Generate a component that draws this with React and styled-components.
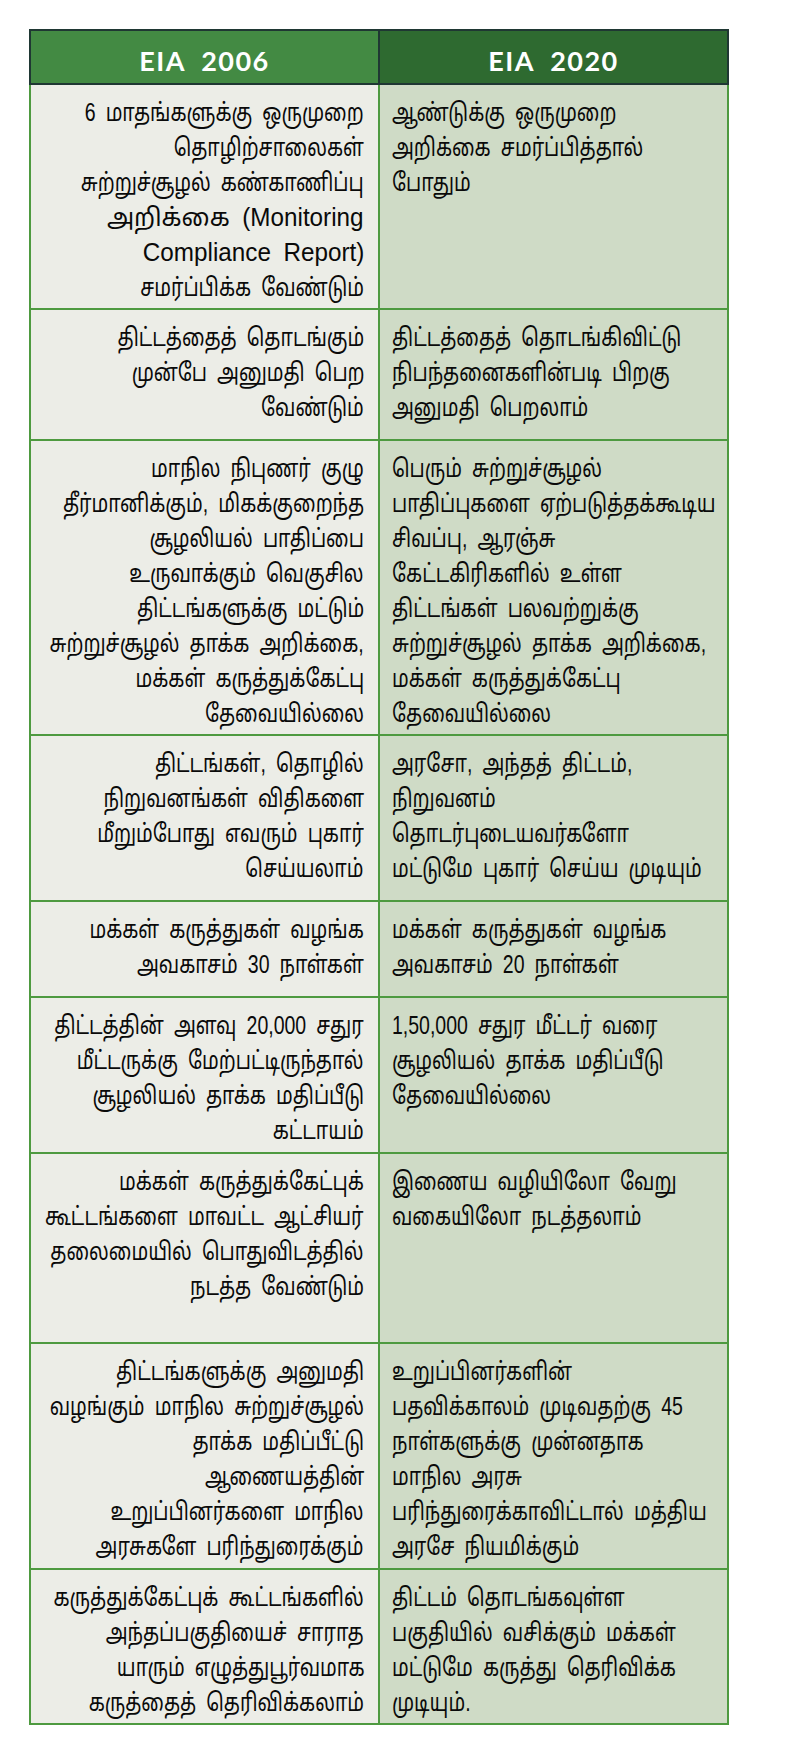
import React from "react";
import styled, { createGlobalStyle } from "styled-components";

const GlobalStyle = createGlobalStyle`
  html, body {
    margin: 0;
    padding: 0;
    background: #ffffff;
  }
  body {
    font-family: "Liberation Sans", "Noto Sans Tamil", "Lohit Tamil", sans-serif;
  }
`;

const Page = styled.div`
  width: 800px;
  min-height: 1746px;
  padding-top: 29px;
  box-sizing: border-box;
`;

const Table = styled.table`
  margin-left: 29px;
  width: 700px;
  border-collapse: collapse;
  table-layout: fixed;
`;

const HeadCell = styled.th`
  height: 44px;
  padding: 8px 0 0;
  border: 2px solid #1f3733;
  background: ${(p) => (p.$dark ? "#2e6a30" : "#438a43")};
  color: #ffffff;
  font-family: "Lato", "Open Sans", sans-serif;
  font-weight: 700;
  font-size: 27px;
  line-height: 40px;
  letter-spacing: 1.5px;
  word-spacing: 8px;
  text-align: center;
  vertical-align: middle;
`;

const Row = styled.tr`
  height: ${(p) => p.$h}px;
`;

const Cell = styled.td`
  padding: 10px ${(p) => (p.$right ? "0 0 12px" : "14px 0 0")};
  border: 2px solid #4e9a40;
  background: ${(p) => (p.$right ? "#cfdbc6" : "#ecede7")};
  vertical-align: top;
  color: #0a0a0a;
  font-size: 25px;
  line-height: 35px;
`;

const Stack = styled.div`
  display: flex;
  flex-direction: column;
  align-items: ${(p) => (p.$right ? "flex-start" : "flex-end")};
`;

/* the print font is a tall condensed Tamil face: squeeze each line sideways */
const Line = styled.span`
  display: block;
  white-space: nowrap;
  word-spacing: 6px;
  transform: scaleX(${(p) => p.$scale || 0.78});
  transform-origin: ${(p) => (p.$right ? "left" : "right")} center;
`;

const rows = [
  {
    h: 225,
    old: [
      "6 மாதங்களுக்கு ஒருமுறை",
      "தொழிற்சாலைகள்",
      "சுற்றுச்சூழல் கண்காணிப்பு",
      ["அறிக்கை (Monitoring", 0.97],
      ["Compliance Report)", 0.97],
      "சமர்ப்பிக்க வேண்டும்",
    ],
    now: ["ஆண்டுக்கு ஒருமுறை", "அறிக்கை சமர்ப்பித்தால்", "போதும்"],
  },
  {
    h: 131,
    old: ["திட்டத்தைத் தொடங்கும்", "முன்பே அனுமதி பெற", "வேண்டும்"],
    now: ["திட்டத்தைத் தொடங்கிவிட்டு", "நிபந்தனைகளின்படி பிறகு", "அனுமதி பெறலாம்"],
  },
  {
    h: 295,
    old: [
      "மாநில நிபுணர் குழு",
      "தீர்மானிக்கும், மிகக்குறைந்த",
      "சூழலியல் பாதிப்பை",
      "உருவாக்கும் வெகுசில",
      "திட்டங்களுக்கு மட்டும்",
      "சுற்றுச்சூழல் தாக்க அறிக்கை,",
      "மக்கள் கருத்துக்கேட்பு",
      "தேவையில்லை",
    ],
    now: [
      "பெரும் சுற்றுச்சூழல்",
      "பாதிப்புகளை ஏற்படுத்தக்கூடிய",
      "சிவப்பு, ஆரஞ்சு",
      "கேட்டகிரிகளில் உள்ள",
      "திட்டங்கள் பலவற்றுக்கு",
      "சுற்றுச்சூழல் தாக்க அறிக்கை,",
      "மக்கள் கருத்துக்கேட்பு",
      "தேவையில்லை",
    ],
  },
  {
    h: 166,
    old: ["திட்டங்கள், தொழில்", "நிறுவனங்கள் விதிகளை", "மீறும்போது எவரும் புகார்", "செய்யலாம்"],
    now: ["அரசோ, அந்தத் திட்டம்,", "நிறுவனம்", "தொடர்புடையவர்களோ", "மட்டுமே புகார் செய்ய முடியும்"],
  },
  {
    h: 96,
    old: ["மக்கள் கருத்துகள் வழங்க", "அவகாசம் 30 நாள்கள்"],
    now: ["மக்கள் கருத்துகள் வழங்க", "அவகாசம் 20 நாள்கள்"],
  },
  {
    h: 156,
    old: ["திட்டத்தின் அளவு 20,000 சதுர", "மீட்டருக்கு மேற்பட்டிருந்தால்", "சூழலியல் தாக்க மதிப்பீடு", "கட்டாயம்"],
    now: ["1,50,000 சதுர மீட்டர் வரை", "சூழலியல் தாக்க மதிப்பீடு", "தேவையில்லை"],
  },
  {
    h: 190,
    old: ["மக்கள் கருத்துக்கேட்புக்", "கூட்டங்களை மாவட்ட ஆட்சியர்", "தலைமையில் பொதுவிடத்தில்", "நடத்த வேண்டும்"],
    now: ["இணைய வழியிலோ வேறு", "வகையிலோ நடத்தலாம்"],
  },
  {
    h: 226,
    old: [
      "திட்டங்களுக்கு அனுமதி",
      "வழங்கும் மாநில சுற்றுச்சூழல்",
      "தாக்க மதிப்பீட்டு",
      "ஆணையத்தின்",
      "உறுப்பினர்களை மாநில",
      "அரசுகளே பரிந்துரைக்கும்",
    ],
    now: [
      "உறுப்பினர்களின்",
      "பதவிக்காலம் முடிவதற்கு 45",
      "நாள்களுக்கு முன்னதாக",
      "மாநில அரசு",
      "பரிந்துரைக்காவிட்டால் மத்திய",
      "அரசே நியமிக்கும்",
    ],
  },
  {
    h: 155,
    old: ["கருத்துக்கேட்புக் கூட்டங்களில்", "அந்தப்பகுதியைச் சாராத", "யாரும் எழுத்துபூர்வமாக", "கருத்தைத் தெரிவிக்கலாம்"],
    now: ["திட்டம் தொடங்கவுள்ள", "பகுதியில் வசிக்கும் மக்கள்", "மட்டுமே கருத்து தெரிவிக்க", "முடியும்."],
  },
];

function Lines({ items, right }) {
  return (
    <Stack $right={right}>
      {items.map((item, j) => {
        const [text, scale] = Array.isArray(item) ? item : [item];
        return (
          <Line key={j} $right={right} $scale={scale}>
            {text}
          </Line>
        );
      })}
    </Stack>
  );
}

function App() {
  return (
    <>
      <GlobalStyle />
      <Page>
        <Table>
          <colgroup>
            <col style={{ width: 349 }} />
            <col />
          </colgroup>
          <thead>
            <tr>
              <HeadCell>EIA 2006</HeadCell>
              <HeadCell $dark>EIA 2020</HeadCell>
            </tr>
          </thead>
          <tbody>
            {rows.map((row, i) => (
              <Row key={i} $h={row.h}>
                <Cell>
                  <Lines items={row.old} />
                </Cell>
                <Cell $right>
                  <Lines items={row.now} right />
                </Cell>
              </Row>
            ))}
          </tbody>
        </Table>
      </Page>
    </>
  );
}

export default App;
